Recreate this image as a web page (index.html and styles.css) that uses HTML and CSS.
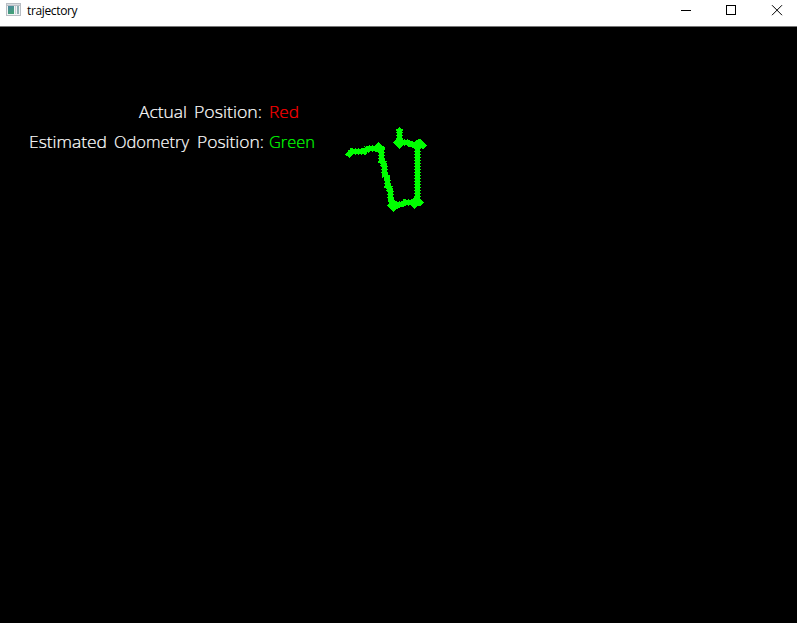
FILE: index.html
```html
<!DOCTYPE html>
<html lang="en">
<head>
<meta charset="utf-8">
<title>trajectory</title>
<link rel="stylesheet" href="styles.css">
</head>
<body>
<div class="window">
  <header class="titlebar">
    <svg class="app-icon" width="15" height="13" viewBox="0 0 15 13" shape-rendering="crispEdges">
      <defs><linearGradient id="pane" x1="0" y1="0" x2="0.4" y2="1"><stop offset="0" stop-color="#4a86a0"/><stop offset="1" stop-color="#43a078"/></linearGradient></defs>
      <rect width="15" height="13" fill="#b9bec4"/>
      <rect x="1" y="1" width="13" height="1" fill="#d9dde1"/>
      <rect x="1" y="3" width="13" height="9" fill="#f2f4f5"/>
      <rect x="2" y="3" width="6" height="8" fill="url(#pane)"/>
      <rect x="9" y="3" width="1" height="8" fill="#c8ced4"/>
      <rect x="11" y="3" width="2" height="8" fill="#8fb0b4"/>
    </svg>
    <span class="title">trajectory</span>
    <div class="controls">
      <svg width="46" height="26" viewBox="0 0 46 26"><path class="glyph crisp" d="M14 10.5H24"/></svg>
      <svg width="46" height="26" viewBox="0 0 46 26"><rect class="glyph crisp" x="13.5" y="5.5" width="9" height="9"/></svg>
      <svg width="46" height="26" viewBox="0 0 46 26"><path class="glyph" d="M13 5.2L23 15.2M23 5.2L13 15.2"/></svg>
    </div>
  </header>
  <svg class="plot" width="797" height="596" viewBox="0 27 797 596">
    <g class="label">
      <text x="139" y="118" textLength="48" lengthAdjust="spacingAndGlyphs">Actual</text>
      <text x="194" y="118" textLength="68" lengthAdjust="spacingAndGlyphs">Position:</text>
      <text class="red" x="269" y="118" textLength="30" lengthAdjust="spacingAndGlyphs">Red</text>
      <text x="29" y="148" textLength="78" lengthAdjust="spacingAndGlyphs">Estimated</text>
      <text x="114" y="148" textLength="75" lengthAdjust="spacingAndGlyphs">Odometry</text>
      <text x="197" y="148" textLength="67" lengthAdjust="spacingAndGlyphs">Position:</text>
      <text class="green" x="269" y="148" textLength="46" lengthAdjust="spacingAndGlyphs">Green</text>
    </g>
    <defs>
      <path id="track" d="M399.5 129V142.5H408L411 144.5H417.5V202.5H405L401 204.5L393.5 205.5L390.5 199V190L387.5 186V178L384.5 174V165L381.5 161V149.5L378.5 148.5H368L364 151.5H352L349 153.5"/>
    </defs>
    <use href="#track" class="track"/>
    <use href="#track" class="track teeth"/>
    <path class="nodes" d="M399.5 127L403 130.5L399.5 134L396 130.5ZM393 142.5L399.5 136L406 142.5L399.5 149ZM420.5 139L427 145.5L423.5 149L420.5 148L417.5 151L411 145.5L417.5 139.5ZM378.5 142L384 147.5V152H376L372 148.5ZM345 154.5L350.5 149L355 153L349.5 158ZM387 205.5L393.5 199L399.5 205.5L393.5 212ZM408 202.5L414.5 197H419L424 202.5L420 206H417L414.5 208.5Z"/>
  </svg>
</div>
</body>
</html>
```
FILE: styles.css
```css
body {
  margin: 0;
  background: #000;
  overflow: hidden;
}

.window {
  display: flex;
  flex-direction: column;
  width: 797px;
  height: 623px;
}

.titlebar {
  display: flex;
  box-sizing: border-box;
  height: 27px;
  padding-left: 6px;
  background: #fff;
  border-bottom: 1px solid #777;
}

.app-icon {
  margin-top: 3px;
}

.title {
  margin-left: 6px;
  font: 12px/22px "Open Sans", "Noto Sans", sans-serif;
  letter-spacing: -0.35px;
  color: #000;
}

.controls {
  display: flex;
  margin-left: auto;
  margin-right: -8px;
}

.glyph {
  fill: none;
  stroke: #000;
  stroke-width: 1;
}

.crisp {
  shape-rendering: crispEdges;
}

.plot {
  display: block;
  background: #000;
}

.label {
  font: 300 16px "Open Sans", "Noto Sans", sans-serif;
  fill: #fff;
  stroke: #fff;
  stroke-width: 0.2;
}

.red {
  fill: #f00;
  stroke: #f00;
}

.green {
  fill: #0f0;
  stroke: #0f0;
}

.track {
  fill: none;
  stroke: #0f0;
  stroke-width: 5.6;
  shape-rendering: crispEdges;
}

.teeth {
  stroke-width: 7.4;
  stroke-dasharray: 1 2;
}

.nodes {
  fill: #0f0;
  shape-rendering: crispEdges;
}
```
